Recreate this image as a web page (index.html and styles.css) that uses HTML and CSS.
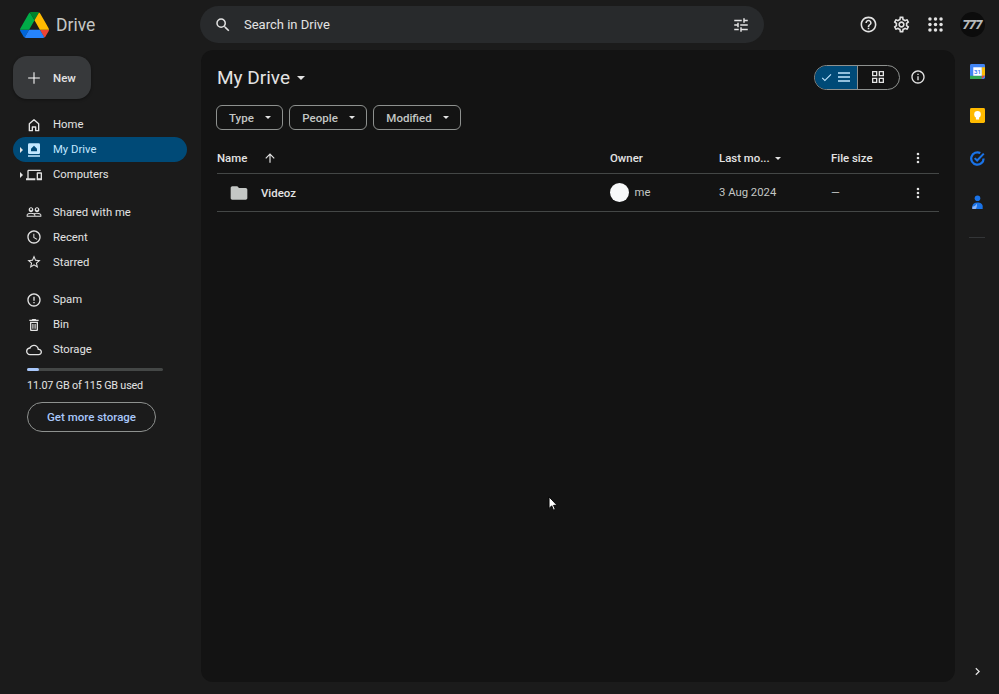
FILE: index.html
```html
<!DOCTYPE html>
<html lang="en">
<head>
    <meta charset="UTF-8">
    <meta name="viewport" content="width=device-width, initial-scale=1.0">
    <title>My Drive - Google Drive</title>
    <link rel="stylesheet" href="styles.css">
</head>
<body>
    <div class="app">
        <!-- Top bar -->
        <header class="topbar">
            <a class="brand" href="#">
                <svg class="brand-logo" viewBox="0 0 87.3 78">
                    <path d="m6.6 66.85 3.85 6.65c.8 1.4 1.95 2.5 3.3 3.3l13.75-23.8h-27.5c0 1.55.4 3.1 1.2 4.5z" fill="#0066da"/>
                    <path d="m43.65 25-13.75-23.8c-1.35.8-2.5 1.9-3.3 3.3l-25.4 44a9.06 9.06 0 0 0 -1.2 4.5h27.5z" fill="#00ac47"/>
                    <path d="m73.55 76.8c1.35-.8 2.5-1.9 3.3-3.3l1.6-2.75 7.65-13.25c.8-1.4 1.2-2.95 1.2-4.5h-27.502l5.852 11.5z" fill="#ea4335"/>
                    <path d="m43.65 25 13.75-23.8c-1.35-.8-2.9-1.2-4.5-1.2h-18.5c-1.6 0-3.15.45-4.5 1.2z" fill="#00832d"/>
                    <path d="m59.8 53h-32.3l-13.75 23.8c1.35.8 2.9 1.2 4.5 1.2h50.8c1.6 0 3.15-.45 4.5-1.2z" fill="#2684fc"/>
                    <path d="m73.4 26.5-12.7-22c-.8-1.4-1.95-2.5-3.3-3.3l-13.75 23.8 16.15 28h27.45c0-1.55-.4-3.1-1.2-4.5z" fill="#ffba00"/>
                </svg>
                <span class="brand-name">Drive</span>
            </a>
            <div class="search">
                <svg class="icon icon-search" viewBox="0 0 24 24"><path d="M15.5 14h-.79l-.28-.27A6.471 6.471 0 0 0 16 9.5 6.5 6.5 0 1 0 9.5 16c1.61 0 3.09-.59 4.23-1.57l.27.28v.79l5 4.99L20.49 19l-4.99-5zm-6 0C7.01 14 5 11.99 5 9.5S7.01 5 9.5 5 14 7.01 14 9.5 11.99 14 9.5 14z"/></svg>
                <span class="search-text">Search in Drive</span>
                <svg class="icon icon-search" viewBox="0 0 24 24"><path d="M3 17v2h6v-2H3zM3 5v2h10V5H3zm10 16v-2h8v-2h-8v-2h-2v6h2zM7 9v2H3v2h4v2h2V9H7zm14 4v-2H11v2h10zm-6-4h2V7h4V5h-4V3h-2v6z"/></svg>
            </div>
            <div class="top-actions">
                <svg class="icon icon-top" viewBox="0 0 24 24"><path d="M11 18h2v-2h-2v2zm1-16C6.48 2 2 6.48 2 12s4.48 10 10 10 10-4.48 10-10S17.52 2 12 2zm0 18c-4.41 0-8-3.59-8-8s3.59-8 8-8 8 3.59 8 8-3.59 8-8 8zm0-14c-2.21 0-4 1.79-4 4h2c0-1.1.9-2 2-2s2 .9 2 2c0 2-3 1.75-3 5h2c0-2.25 3-2.5 3-5 0-2.21-1.79-4-4-4z"/></svg>
                <svg class="icon icon-top" viewBox="0 0 24 24"><path d="M19.43 12.98c.04-.32.07-.64.07-.98 0-.34-.03-.66-.07-.98l2.11-1.65c.19-.15.24-.42.12-.64l-2-3.46c-.09-.16-.26-.25-.44-.25-.06 0-.12.01-.17.03l-2.49 1c-.52-.4-1.08-.73-1.69-.98l-.38-2.65C14.46 2.18 14.25 2 14 2h-4c-.25 0-.46.18-.49.42l-.38 2.65c-.61.25-1.17.59-1.69.98l-2.49-1c-.06-.02-.12-.03-.18-.03-.17 0-.34.09-.43.25l-2 3.46c-.13.22-.07.49.12.64l2.11 1.65c-.04.32-.07.65-.07.98 0 .33.03.66.07.98l-2.11 1.65c-.19.15-.24.42-.12.64l2 3.46c.09.16.26.25.44.25.06 0 .12-.01.17-.03l2.49-1c.52.4 1.08.73 1.69.98l.38 2.65c.03.24.24.42.49.42h4c.25 0 .46-.18.49-.42l.38-2.65c.61-.25 1.17-.59 1.69-.98l2.49 1c.06.02.12.03.18.03.17 0 .34-.09.43-.25l2-3.46c.12-.22.07-.49-.12-.64l-2.11-1.65zm-1.98-1.71c.04.31.05.52.05.73 0 .21-.02.43-.05.73l-.14 1.13.89.7 1.08.84-.7 1.21-1.27-.51-1.04-.42-.9.68c-.43.32-.84.56-1.25.73l-1.06.43-.16 1.13-.2 1.35h-1.4l-.19-1.35-.16-1.13-1.06-.43c-.43-.18-.83-.41-1.23-.71l-.91-.7-1.06.43-1.27.51-.7-1.21 1.08-.84.89-.7-.14-1.13c-.03-.31-.05-.54-.05-.74s.02-.43.05-.73l.14-1.13-.89-.7-1.08-.84.7-1.21 1.27.51 1.04.42.9-.68c.43-.32.84-.56 1.25-.73l1.06-.43.16-1.13.2-1.35h1.39l.19 1.35.16 1.13 1.06.43c.43.18.83.41 1.23.71l.91.7 1.06-.43 1.27-.51.7 1.21-1.07.85-.89.7.14 1.13zM12 8c-2.21 0-4 1.79-4 4s1.79 4 4 4 4-1.79 4-4-1.79-4-4-4zm0 6c-1.1 0-2-.9-2-2s.9-2 2-2 2 .9 2 2-.9 2-2 2z"/></svg>
                <svg class="icon icon-top" viewBox="0 0 24 24">
                    <circle cx="5" cy="5" r="2.2"/><circle cx="12" cy="5" r="2.2"/><circle cx="19" cy="5" r="2.2"/>
                    <circle cx="5" cy="12" r="2.2"/><circle cx="12" cy="12" r="2.2"/><circle cx="19" cy="12" r="2.2"/>
                    <circle cx="5" cy="19" r="2.2"/><circle cx="12" cy="19" r="2.2"/><circle cx="19" cy="19" r="2.2"/>
                </svg>
                <div class="avatar">777</div>
            </div>
        </header>

        <div class="workspace">
            <!-- Left navigation -->
            <aside class="sidebar">
                <button class="new-btn">
                    <svg class="new-plus" viewBox="0 0 24 24"><path d="M12 2v20M2 12h20"/></svg>
                    <span>New</span>
                </button>

                <nav class="nav-group">
                    <a class="nav-item" href="#">
                        <svg class="icon icon-nav" viewBox="0 0 24 24"><path class="line" d="M5 20.5V10.2L12 4l7 6.2v10.3h-4.5V15h-5v5.5z"/></svg>
                        <span>Home</span>
                    </a>
                    <a class="nav-item active" href="#">
                        <span class="caret-right"></span>
                        <svg class="icon icon-nav" viewBox="0 0 24 24"><path d="M5 2h14a2 2 0 0 1 2 2v12a2 2 0 0 1-2 2H5a2 2 0 0 1-2-2V4a2 2 0 0 1 2-2zm7 3.5L7.5 10v4h9v-4zM3 20h18v2H3z"/><circle cx="12" cy="11.5" r="1.6" fill="#004a77"/></svg>
                        <span>My Drive</span>
                    </a>
                    <a class="nav-item" href="#">
                        <span class="caret-right"></span>
                        <svg class="icon icon-nav" viewBox="0 0 24 24"><path d="M4 6h18V4H4c-1.1 0-2 .9-2 2v11H0v3h14v-3H4V6zm19 2h-6c-.55 0-1 .45-1 1v10c0 .55.45 1 1 1h6c.55 0 1-.45 1-1V9c0-.55-.45-1-1-1zm-1 9h-4v-7h4v7z"/></svg>
                        <span>Computers</span>
                    </a>
                </nav>

                <nav class="nav-group">
                    <a class="nav-item" href="#">
                        <svg class="icon icon-nav" viewBox="0 0 24 24"><path d="M16.5 13c-1.2 0-3.07.34-4.5 1-1.43-.67-3.3-1-4.5-1C5.33 13 1 14.08 1 16.25V19h22v-2.75c0-2.17-4.33-3.25-6.5-3.25zm-4 4.5h-10v-1.25c0-.54 2.56-1.75 5-1.75s5 1.21 5 1.75v1.25zm9 0H14v-1.25c0-.46-.2-.86-.52-1.22.88-.3 1.96-.53 3.02-.53 2.44 0 5 1.21 5 1.75v1.25zM7.5 12c1.93 0 3.5-1.57 3.5-3.5S9.43 5 7.5 5 4 6.57 4 8.5 5.57 12 7.5 12zm0-5.5c.83 0 1.5.67 1.5 1.5s-.67 1.5-1.5 1.5S6 8.83 6 8s.67-1.5 1.5-1.5zm9 5.5c1.93 0 3.5-1.57 3.5-3.5S18.43 5 16.5 5 13 6.57 13 8.5s1.57 3.5 3.5 3.5zm0-5.5c.83 0 1.5.67 1.5 1.5s-.67 1.5-1.5 1.5S15 8.83 15 8s.67-1.5 1.5-1.5z"/></svg>
                        <span>Shared with me</span>
                    </a>
                    <a class="nav-item" href="#">
                        <svg class="icon icon-nav" viewBox="0 0 24 24"><path d="M11.99 2C6.47 2 2 6.48 2 12s4.47 10 9.99 10C17.52 22 22 17.52 22 12S17.52 2 11.99 2zM12 20c-4.42 0-8-3.58-8-8s3.58-8 8-8 8 3.58 8 8-3.58 8-8 8zm.5-13H11v6l5.25 3.15.75-1.23-4.5-2.67z"/></svg>
                        <span>Recent</span>
                    </a>
                    <a class="nav-item" href="#">
                        <svg class="icon icon-nav" viewBox="0 0 24 24"><path d="M22 9.24l-7.19-.62L12 2 9.19 8.63 2 9.24l5.46 4.73L5.82 21 12 17.27 18.18 21l-1.63-7.03L22 9.24zM12 15.4l-3.76 2.27 1-4.28-3.32-2.88 4.38-.38L12 6.1l1.71 4.04 4.38.38-3.32 2.88 1 4.28L12 15.4z"/></svg>
                        <span>Starred</span>
                    </a>
                </nav>

                <nav class="nav-group">
                    <a class="nav-item" href="#">
                        <svg class="icon icon-nav" viewBox="0 0 24 24"><path d="M11 15h2v2h-2zm0-8h2v6h-2zm.99-5C6.47 2 2 6.48 2 12s4.47 10 9.99 10C17.52 22 22 17.52 22 12S17.52 2 11.99 2zM12 20c-4.42 0-8-3.58-8-8s3.58-8 8-8 8 3.58 8 8-3.58 8-8 8z"/></svg>
                        <span>Spam</span>
                    </a>
                    <a class="nav-item" href="#">
                        <svg class="icon icon-nav" viewBox="0 0 24 24"><path d="M6 19c0 1.1.9 2 2 2h8c1.1 0 2-.9 2-2V7H6v12zM8 9h8v10H8V9zm7.5-5l-1-1h-5l-1 1H5v2h14V4zM9.5 10.5h1.7v7H9.5zm3.3 0h1.7v7h-1.700z"/></svg>
                        <span>Bin</span>
                    </a>
                    <a class="nav-item" href="#">
                        <svg class="icon icon-nav" viewBox="0 0 24 24"><path d="M19.35 10.04C18.67 6.59 15.64 4 12 4 9.11 4 6.6 5.64 5.35 8.04 2.34 8.36 0 10.91 0 14c0 3.31 2.69 6 6 6h13c2.76 0 5-2.24 5-5 0-2.64-2.05-4.78-4.65-4.96zM19 18H6c-2.21 0-4-1.79-4-4s1.79-4 4-4h.71C7.37 7.69 9.48 6 12 6c3.04 0 5.5 2.46 5.5 5.5v.5H19c1.66 0 3 1.34 3 3s-1.34 3-3 3z"/></svg>
                        <span>Storage</span>
                    </a>
                </nav>

                <div class="storage">
                    <div class="storage-track"><div class="storage-fill" style="width: 9%"></div></div>
                    <div class="storage-text">11.07 GB of 115 GB used</div>
                    <button class="storage-btn">Get more storage</button>
                </div>
            </aside>

            <!-- File list -->
            <main class="panel">
                <div class="panel-head">
                    <h1 class="panel-title">My Drive <span class="caret caret-big"></span></h1>
                    <div class="view-toggle">
                        <div class="view-list">
                            <svg class="icon icon-check" viewBox="0 0 24 24"><path d="M9 16.17 4.83 12l-1.42 1.41L9 19 21 7l-1.41-1.41z"/></svg>
                            <svg class="icon icon-view" viewBox="0 0 24 24"><path d="M3 5h18v2H3zm0 6h18v2H3zm0 6h18v2H3z"/></svg>
                        </div>
                        <div class="view-grid">
                            <svg class="icon icon-view" viewBox="0 0 24 24"><path d="M3 3h8v8H3zm2 2v4h4V5zm8-2h8v8h-8zm2 2v4h4V5zM3 13h8v8H3zm2 2v4h4v-4zm8-2h8v8h-8zm2 2v4h4v-4z"/></svg>
                        </div>
                    </div>
                    <svg class="icon icon-info" viewBox="0 0 24 24"><path d="M11 7h2v2h-2zm0 4h2v6h-2zm1-9C6.48 2 2 6.48 2 12s4.48 10 10 10 10-4.48 10-10S17.52 2 12 2zm0 18c-4.41 0-8-3.59-8-8s3.59-8 8-8 8 3.59 8 8-3.59 8-8 8z"/></svg>
                </div>

                <div class="filters">
                    <button class="chip">Type <span class="caret"></span></button>
                    <button class="chip">People <span class="caret"></span></button>
                    <button class="chip">Modified <span class="caret"></span></button>
                </div>

                <div class="file-row file-head">
                    <div class="cell-name">
                        <span class="head-name">Name</span>
                        <svg class="icon icon-sort" viewBox="0 0 24 24"><path d="M4 12l1.41 1.41L11 7.83V20h2V7.83l5.58 5.59L20 12l-8-8z"/></svg>
                    </div>
                    <div>Owner</div>
                    <div class="cell-modified">Last mo... <span class="caret"></span></div>
                    <div>File size</div>
                    <svg class="icon icon-more" viewBox="0 0 24 24"><circle cx="12" cy="5" r="2.2"/><circle cx="12" cy="12" r="2.2"/><circle cx="12" cy="19" r="2.2"/></svg>
                </div>

                <div class="file-row">
                    <div class="cell-name">
                        <svg class="icon icon-folder" viewBox="0 0 24 24"><path d="M10 4H4c-1.1 0-2 .9-2 2v12c0 1.1.9 2 2 2h16c1.1 0 2-.9 2-2V8c0-1.1-.9-2-2-2h-8l-2-2z"/></svg>
                        <span class="file-name">Videoz</span>
                    </div>
                    <div class="cell-owner"><span class="owner-pic"></span>me</div>
                    <div>3 Aug 2024</div>
                    <div>—</div>
                    <svg class="icon icon-more" viewBox="0 0 24 24"><circle cx="12" cy="5" r="2.2"/><circle cx="12" cy="12" r="2.2"/><circle cx="12" cy="19" r="2.2"/></svg>
                </div>
            </main>

            <!-- Right side apps -->
            <aside class="rail">
                <div class="rail-apps">
                    <svg class="rail-icon" viewBox="0 0 16 16">
                        <rect width="16" height="16" rx="1.5" fill="#4285f4"/>
                        <rect x="12.5" y="3.5" width="3.5" height="9" fill="#fbbc04"/>
                        <rect y="12.5" width="12.5" height="3.5" fill="#34a853"/>
                        <path d="M12.5 12.5H16L12.5 16z" fill="#ea4335"/>
                        <rect x="3.5" y="3.5" width="9" height="9" fill="#fff"/>
                        <text class="calendar-day" x="8" y="10.6">31</text>
                    </svg>
                    <svg class="rail-icon" viewBox="0 0 16 16">
                        <rect width="16" height="16" rx="1.5" fill="#ffba00"/>
                        <circle cx="8" cy="6.8" r="3.5" fill="#fff"/>
                        <rect x="6.3" y="9.5" width="3.4" height="2.8" fill="#fff"/>
                    </svg>
                    <svg class="rail-icon" viewBox="0 0 16 16">
                        <path d="M11 2.2A6.6 6.6 0 1 0 14.5 8" fill="none" stroke="#1a73e8" stroke-width="2.4"/>
                        <path d="M5 7.6 7.6 10.2 14.7 2.8" fill="none" stroke="#1a73e8" stroke-width="2.2"/>
                    </svg>
                    <svg class="rail-icon" viewBox="0 0 16 16">
                        <circle cx="8" cy="3.5" r="3" fill="#1a73e8"/>
                        <path d="M2.5 15v-3c0-2.5 2.5-4 5.5-4s5.500 1.500 5.500 4v3z" fill="#1a73e8"/>
                        <path d="M2.5 15v-2.5c1.500 0 3.500-1 5-3.500 0 3-.5 5-1.500 6z" fill="#8ab4f8"/>
                    </svg>
                </div>
                <div class="rail-divider"></div>
                <svg class="rail-chevron" viewBox="0 0 24 24"><path d="M8.59 16.59 13.17 12 8.59 7.41 10 6l6 6-6 6z"/></svg>
            </aside>
        </div>

        <!-- Mouse pointer from the capture -->
        <svg class="pointer" viewBox="0 0 12 18"><path d="M1 1v13l3-3 2 5 2-1-2-4.5h4z"/></svg>
    </div>
</body>
</html>
```

FILE: styles.css
```css
/* Drive dark theme */
:root {
    --bg: #1b1b1b;
    --panel: #131313;
    --text: #e3e3e3;
    --muted: #c4c7c5;
    --line: #444746;
    --active: #004a77;
    --accent: #a8c7fa;
}

* {
    box-sizing: border-box;
    margin: 0;
    padding: 0;
}

body {
    font-family: Roboto, "Liberation Sans", sans-serif;
    font-size: 11.3px;
    color: var(--text);
    background-color: var(--bg);
}

button {
    font-family: inherit;
    color: inherit;
    background: none;
}

a {
    color: inherit;
    text-decoration: none;
}

.app {
    position: relative;
    display: flex;
    flex-direction: column;
    height: 100vh;
    overflow: hidden;
}

.icon {
    flex: none;
    fill: var(--text);
}

.line {
    fill: none;
    stroke: var(--text);
    stroke-width: 2;
    stroke-linejoin: round;
}

.caret {
    display: inline-block;
    border-left: 3.5px solid transparent;
    border-right: 3.5px solid transparent;
    border-top: 3.5px solid var(--text);
}

.caret-big {
    border-left-width: 4.5px;
    border-right-width: 4.5px;
    border-top-width: 4.5px;
    margin-left: 2px;
    vertical-align: middle;
}

.caret-right {
    position: absolute;
    left: 7px;
    top: 10px;
    border-top: 3px solid transparent;
    border-bottom: 3px solid transparent;
    border-left: 3px solid var(--text);
}

/* Top bar */
.topbar {
    display: flex;
    align-items: center;
    height: 50px;
    flex: none;
    padding-bottom: 1px;
}

.brand {
    display: flex;
    align-items: center;
    gap: 7px;
    width: 200px;
    padding-left: 20px;
}

.brand-logo {
    width: 29px;
    height: 26px;
}

.brand-name {
    font-size: 17.5px;
    color: var(--muted);
}

.search {
    display: flex;
    align-items: center;
    width: 564px;
    height: 37px;
    padding: 0 14px;
    border-radius: 19px;
    background-color: #282a2c;
}

.icon-search {
    width: 18px;
    height: 18px;
}

.search-text {
    flex: 1;
    margin-left: 12px;
    font-size: 13px;
}

.top-actions {
    display: flex;
    align-items: center;
    flex: 1;
    padding-left: 94.5px;
}

.icon-top {
    width: 19px;
    height: 19px;
    margin-right: 14.5px;
}

.avatar {
    flex: none;
    width: 25px;
    height: 25px;
    margin-left: 0.5px;
    border-radius: 50%;
    background-color: #0c0c0c;
    color: #b5b8ba;
    font-size: 13px;
    font-weight: 900;
    font-style: italic;
    line-height: 25px;
    text-align: center;
    letter-spacing: -1px;
}

.workspace {
    display: flex;
    flex: 1;
    min-height: 0;
}

/* Sidebar */
.sidebar {
    flex: none;
    width: 201px;
    padding: 6px 14px 0 13px;
}

.new-btn {
    display: flex;
    align-items: center;
    gap: 12px;
    width: 78px;
    height: 43px;
    padding-left: 14px;
    margin-bottom: 13px;
    border: none;
    border-radius: 14px;
    background-color: #37393b;
    box-shadow: 0 1px 3px rgba(0, 0, 0, 0.4);
    font-size: 11.5px;
    font-weight: 500;
}

.new-plus {
    width: 14px;
    height: 14px;
    fill: none;
    stroke: #fff;
    stroke-width: 1.8;
}

.nav-group {
    margin-bottom: 12.5px;
}

.nav-group:last-of-type {
    margin-bottom: 0;
}

.nav-item {
    position: relative;
    display: flex;
    align-items: center;
    height: 25px;
    padding-left: 13px;
    border-radius: 13px;
}

.nav-item.active {
    background-color: var(--active);
    color: #c2e7ff;
}

.icon-nav {
    width: 16px;
    height: 16px;
    margin-right: 11px;
}

.active .icon-nav {
    fill: #c2e7ff;
}

.storage {
    padding: 6px 0 0 14px;
}

.storage-track {
    width: 136px;
    height: 3px;
    border-radius: 2px;
    background-color: #444746;
}

.storage-fill {
    height: 100%;
    border-radius: 2px;
    background-color: var(--accent);
}

.storage-text {
    margin-top: 7px;
    font-size: 10.8px;
    letter-spacing: -0.18px;
    line-height: 15px;
}

.storage-btn {
    width: 129px;
    height: 30px;
    margin-top: 9px;
    border: 1px solid #8e918f;
    border-radius: 15px;
    color: var(--accent);
    font-size: 11.5px;
    font-weight: 500;
}

/* File panel */
.panel {
    flex: none;
    width: 754px;
    height: 632px;
    padding: 0 16px;
    border-radius: 12px;
    background-color: var(--panel);
}

.panel-head {
    display: flex;
    align-items: center;
    height: 54px;
    margin-bottom: 1px;
}

.panel-title {
    flex: 1;
    font-size: 19px;
    font-weight: 400;
}

.view-toggle {
    display: flex;
    width: 86px;
    height: 25px;
    margin-right: 10px;
    border: 1px solid #8e918f;
    border-radius: 13px;
    overflow: hidden;
}

.view-list {
    display: flex;
    align-items: center;
    justify-content: center;
    gap: 3px;
    width: 43px;
    border-right: 1px solid #8e918f;
    background-color: var(--active);
}

.view-grid {
    display: flex;
    align-items: center;
    justify-content: center;
    flex: 1;
    padding-right: 1px;
}

.icon-check {
    width: 13px;
    height: 13px;
    fill: #c2e7ff;
}

.icon-view {
    width: 16px;
    height: 16px;
}

.view-list .icon-view {
    fill: #c2e7ff;
}

.icon-info {
    width: 16px;
    height: 16px;
    margin-right: 13px;
}

.filters {
    display: flex;
    gap: 6.5px;
    margin-left: -1px;
}

.chip {
    display: flex;
    align-items: center;
    gap: 11px;
    height: 25px;
    padding: 0 11px 0 12px;
    border: 1px solid #8e918f;
    border-radius: 6px;
    color: var(--muted);
    font-size: 11.5px;
    font-weight: 500;
}

/* File table */
.file-row {
    display: grid;
    grid-template-columns: 393px 109px 112px 1fr 16px;
    align-items: center;
    height: 38px;
    padding-right: 13px;
    border-bottom: 1px solid var(--line);
    color: var(--muted);
    font-size: 11.3px;
}

.file-head {
    height: 31px;
    margin-top: 13px;
    color: var(--text);
    font-size: 11.4px;
    font-weight: 500;
}

.cell-name {
    display: flex;
    align-items: center;
}

.head-name {
    width: 45.5px;
}

.icon-sort {
    width: 14px;
    height: 14px;
}

.cell-modified {
    display: flex;
    align-items: center;
    gap: 5px;
}

.icon-folder {
    width: 20px;
    height: 20px;
    margin: 0 12px;
    fill: #c4c7c5;
}

.file-name {
    color: var(--text);
    font-size: 11.4px;
    font-weight: 500;
}

.cell-owner {
    display: flex;
    align-items: center;
    gap: 6px;
}

.owner-pic {
    width: 19px;
    height: 19px;
    margin-left: -0.5px;
    border-radius: 50%;
    background-color: #f8f9fa;
}

.icon-more {
    width: 14px;
    height: 14px;
    justify-self: center;
}

/* Right rail */
.rail {
    display: flex;
    flex-direction: column;
    align-items: center;
    flex: 1;
    padding-top: 14px;
}

.rail-apps {
    display: flex;
    flex-direction: column;
    gap: 28.5px;
}

.rail-icon {
    display: block;
    width: 15px;
    height: 15px;
}

.calendar-day {
    font-size: 6.5px;
    font-weight: 700;
    fill: #4285f4;
    text-anchor: middle;
}

.rail-divider {
    width: 16px;
    height: 1px;
    margin-top: 27px;
    background-color: #333537;
}

.rail-chevron {
    width: 15px;
    height: 15px;
    margin-top: auto;
    margin-bottom: 15px;
    fill: var(--text);
}

.pointer {
    position: absolute;
    left: 548px;
    top: 496px;
    width: 11px;
    height: 16px;
    fill: #fff;
    stroke: #000;
    stroke-width: 1;
}
```
